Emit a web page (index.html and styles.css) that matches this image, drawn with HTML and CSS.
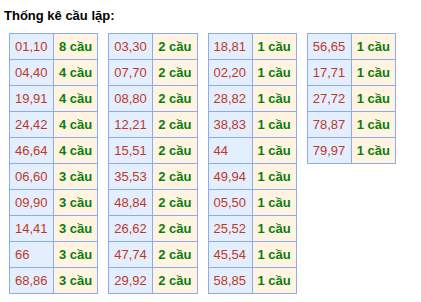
FILE: index.html
```html
<!DOCTYPE html>
<html lang="vi">
<head>
<meta charset="utf-8">
<title>Thống kê cầu lặp</title>
<link rel="stylesheet" href="styles.css">
</head>
<body>
<div class="stats">
  <h3 class="stats-title">Thống kê cầu lặp:</h3>
  <div class="stats-tables">
    <table class="loop-table">
      <tr><td class="pair">01,10</td><td class="count">8 cầu</td></tr>
      <tr><td class="pair">04,40</td><td class="count">4 cầu</td></tr>
      <tr><td class="pair">19,91</td><td class="count">4 cầu</td></tr>
      <tr><td class="pair">24,42</td><td class="count">4 cầu</td></tr>
      <tr><td class="pair">46,64</td><td class="count">4 cầu</td></tr>
      <tr><td class="pair">06,60</td><td class="count">3 cầu</td></tr>
      <tr><td class="pair">09,90</td><td class="count">3 cầu</td></tr>
      <tr><td class="pair">14,41</td><td class="count">3 cầu</td></tr>
      <tr><td class="pair">66</td><td class="count">3 cầu</td></tr>
      <tr><td class="pair">68,86</td><td class="count">3 cầu</td></tr>
    </table>
    <table class="loop-table">
      <tr><td class="pair">03,30</td><td class="count">2 cầu</td></tr>
      <tr><td class="pair">07,70</td><td class="count">2 cầu</td></tr>
      <tr><td class="pair">08,80</td><td class="count">2 cầu</td></tr>
      <tr><td class="pair">12,21</td><td class="count">2 cầu</td></tr>
      <tr><td class="pair">15,51</td><td class="count">2 cầu</td></tr>
      <tr><td class="pair">35,53</td><td class="count">2 cầu</td></tr>
      <tr><td class="pair">48,84</td><td class="count">2 cầu</td></tr>
      <tr><td class="pair">26,62</td><td class="count">2 cầu</td></tr>
      <tr><td class="pair">47,74</td><td class="count">2 cầu</td></tr>
      <tr><td class="pair">29,92</td><td class="count">2 cầu</td></tr>
    </table>
    <table class="loop-table">
      <tr><td class="pair">18,81</td><td class="count">1 cầu</td></tr>
      <tr><td class="pair">02,20</td><td class="count">1 cầu</td></tr>
      <tr><td class="pair">28,82</td><td class="count">1 cầu</td></tr>
      <tr><td class="pair">38,83</td><td class="count">1 cầu</td></tr>
      <tr><td class="pair">44</td><td class="count">1 cầu</td></tr>
      <tr><td class="pair">49,94</td><td class="count">1 cầu</td></tr>
      <tr><td class="pair">05,50</td><td class="count">1 cầu</td></tr>
      <tr><td class="pair">25,52</td><td class="count">1 cầu</td></tr>
      <tr><td class="pair">45,54</td><td class="count">1 cầu</td></tr>
      <tr><td class="pair">58,85</td><td class="count">1 cầu</td></tr>
    </table>
    <table class="loop-table">
      <tr><td class="pair">56,65</td><td class="count">1 cầu</td></tr>
      <tr><td class="pair">17,71</td><td class="count">1 cầu</td></tr>
      <tr><td class="pair">27,72</td><td class="count">1 cầu</td></tr>
      <tr><td class="pair">78,87</td><td class="count">1 cầu</td></tr>
      <tr><td class="pair">79,97</td><td class="count">1 cầu</td></tr>
    </table>
  </div>
</div>
</body>
</html>
```

FILE: styles.css
```css
html, body {
  margin: 0;
  padding: 0;
  background: #ffffff;
}

.stats {
  font-family: "Liberation Sans", Arial, sans-serif;
  padding: 8px 0 0 4px;
}

.stats-title {
  margin: 0;
  font-size: 13px;
  line-height: 16px;
  font-weight: bold;
  color: #000000;
}

.stats-tables {
  display: flex;
  align-items: flex-start;
  gap: 10px;
  margin-top: 9px;
  padding-left: 5px;
}

.loop-table {
  border-collapse: collapse;
  font-size: 13px;
  line-height: 15px;
}

.loop-table td {
  border: 1px solid #8cacee;
  width: 44px;
  height: 26px;
  padding: 0 5px;
  box-sizing: border-box;
  text-align: left;
  vertical-align: middle;
  white-space: nowrap;
}

.loop-table td.pair {
  background: #e3eeff;
  color: #c0391f;
}

.loop-table td.count {
  background: #fff4e2;
  color: #0a7d0a;
  font-weight: bold;
}
```
